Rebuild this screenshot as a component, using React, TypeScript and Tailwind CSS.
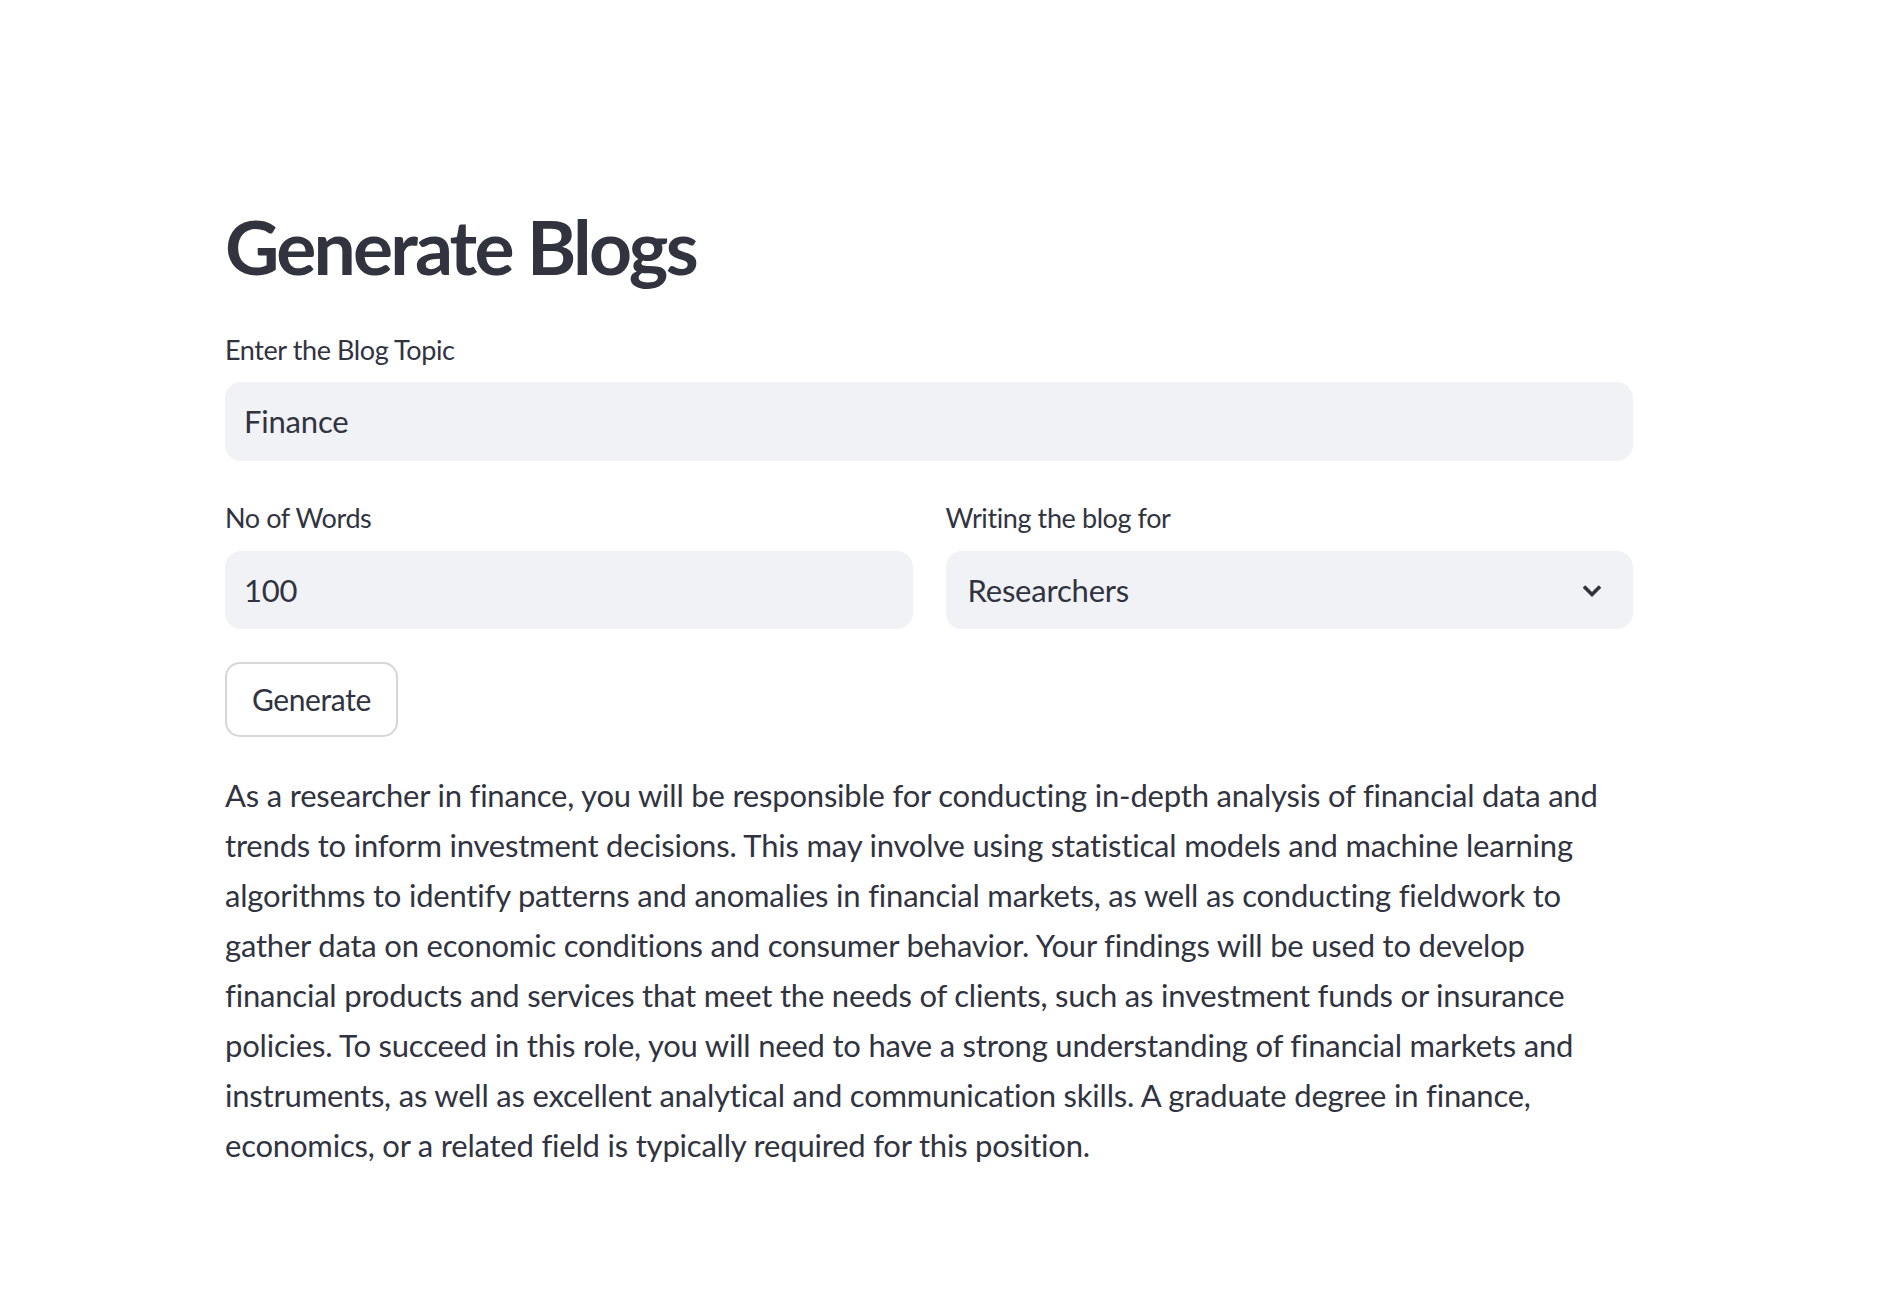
const lines = [
  'As a researcher in finance, you will be responsible for conducting in-depth analysis of financial data and',
  'trends to inform investment decisions. This may involve using statistical models and machine learning',
  'algorithms to identify patterns and anomalies in financial markets, as well as conducting fieldwork to',
  'gather data on economic conditions and consumer behavior. Your findings will be used to develop',
  'financial products and services that meet the needs of clients, such as investment funds or insurance',
  'policies. To succeed in this role, you will need to have a strong understanding of financial markets and',
  'instruments, as well as excellent analytical and communication skills. A graduate degree in finance,',
  'economics, or a related field is typically required for this position.',
]

function Label({ children }: { children: React.ReactNode }) {
  return <div className="text-[27px] leading-[34px] tracking-[-0.4px] text-[#31333f]">{children}</div>
}

export default function App() {
  return (
    <div className="min-h-screen bg-white font-['Lato',sans-serif] text-[#31333f]">
      <div className="pl-[225px] pt-[196px] w-[1633px]">
        <h1 className="text-[75px] font-bold leading-[100px] tracking-[-2.8px]">Generate Blogs</h1>

        <div className="mt-[37px]">
          <Label>Enter the Blog Topic</Label>
          <div className="mt-[15px] h-[79px] rounded-[16px] bg-[#f0f2f6] flex items-center px-[19px] text-[31px] tracking-[-0.2px]">
            Finance
          </div>
        </div>

        <div className="mt-[40px] grid grid-cols-2 gap-[33px]">
          <div>
            <Label>No of Words</Label>
            <div className="mt-[16px] h-[78px] rounded-[16px] bg-[#f0f2f6] flex items-center px-[19px] text-[31px] tracking-[-0.2px]">
              100
            </div>
          </div>
          <div>
            <Label>Writing the blog for</Label>
            <div className="mt-[16px] h-[78px] rounded-[16px] bg-[#f0f2f6] flex items-center justify-between pl-[22px] pr-[31px] text-[31px] tracking-[-0.2px]">
              <span>Researchers</span>
              <svg width="20" height="13" viewBox="0 0 20 13" fill="none" stroke="#31333f" strokeWidth="3.6" strokeLinejoin="miter">
                <path d="M2 2.5l8 8 8-8" />
              </svg>
            </div>
          </div>
        </div>

        <button className="mt-[33px] h-[75px] px-[25px] rounded-[15px] border-2 border-[#d6d6d9] bg-white text-[30px] tracking-[-0.4px] text-[#31333f]">
          Generate
        </button>

        <div className="mt-[33px] text-[31px] leading-[50px] tracking-[-0.2px]">
          {lines.map((l) => (
            <div key={l} className="whitespace-nowrap">{l}</div>
          ))}
        </div>
      </div>
    </div>
  )
}
